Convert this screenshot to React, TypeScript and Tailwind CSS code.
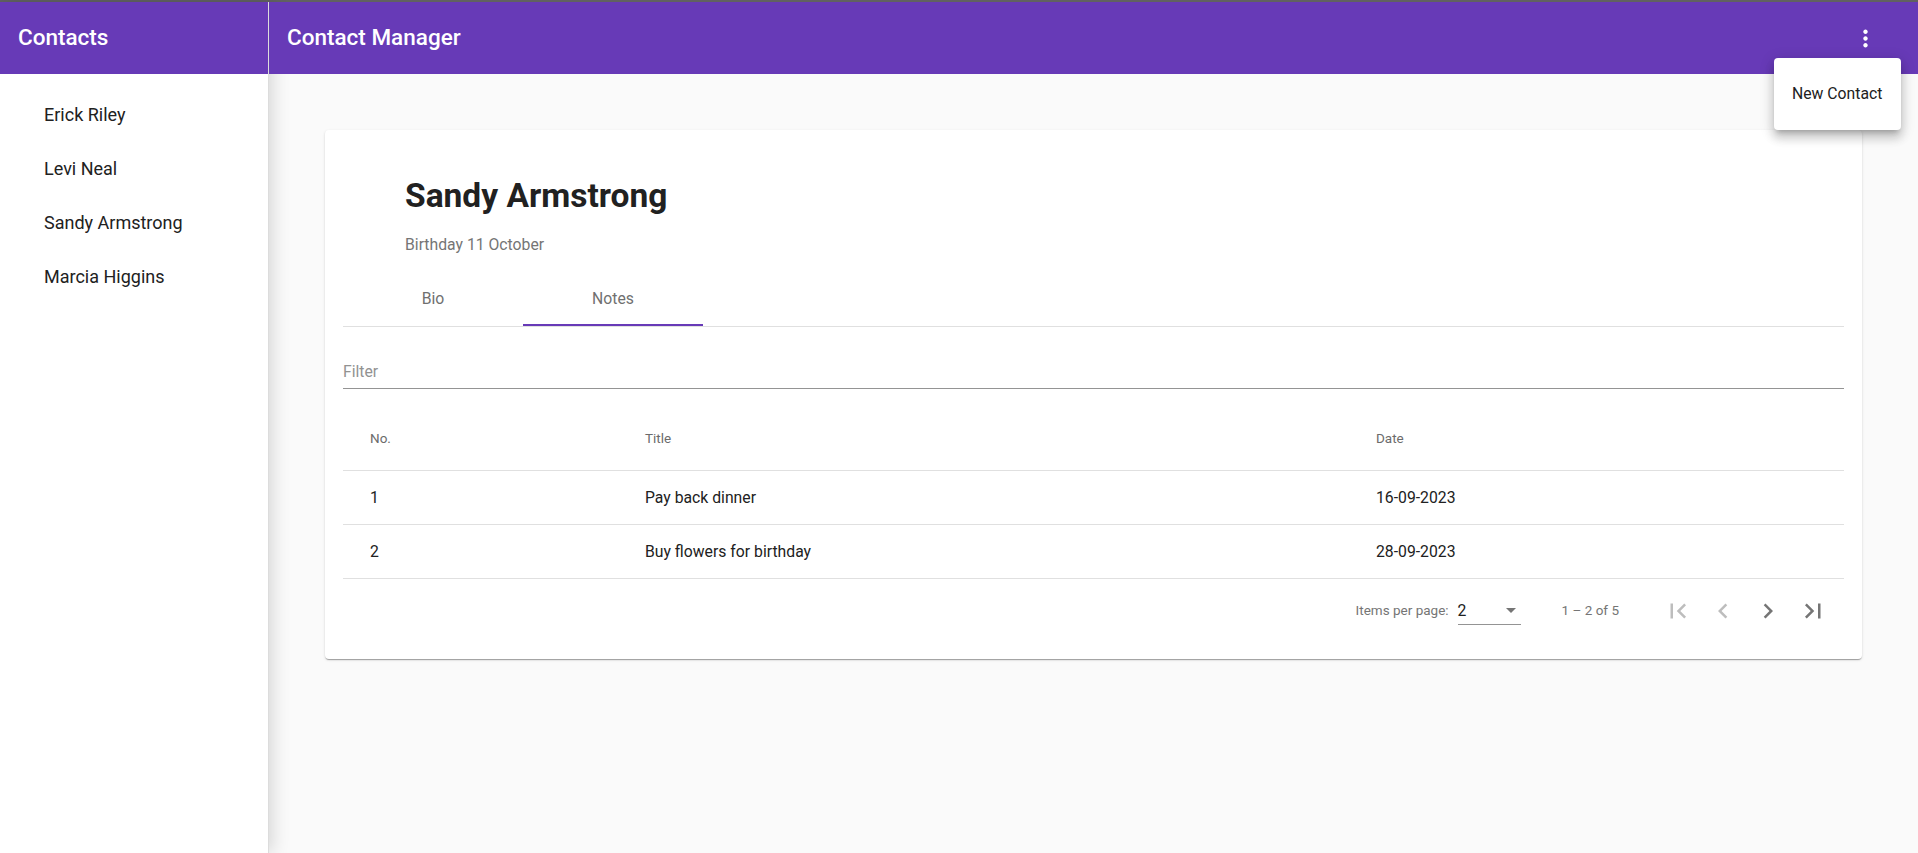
import React from 'react'

const contacts = ['Erick Riley', 'Levi Neal', 'Sandy Armstrong', 'Marcia Higgins']

const notes = [
    { no: 1, title: 'Pay back dinner', date: '16-09-2023' },
    { no: 2, title: 'Buy flowers for birthday', date: '28-09-2023' },
]

const icons = {
    more: 'M12 8c1.1 0 2-.9 2-2s-.9-2-2-2-2 .9-2 2 .9 2 2 2zm0 2c-1.1 0-2 .9-2 2s.9 2 2 2 2-.9 2-2-.9-2-2-2zm0 6c-1.1 0-2 .9-2 2s.9 2 2 2 2-.9 2-2-.9-2-2-2z',
    first: 'M18.41 16.59L13.82 12l4.59-4.59L17 6l-6 6 6 6zM6 6h2v12H6z',
    prev: 'M15.41 7.41L14 6l-6 6 6 6 1.41-1.41L10.83 12z',
    next: 'M10 6L8.59 7.41 13.17 12l-4.58 4.59L10 18l6-6z',
    last: 'M5.59 7.41L10.18 12l-4.59 4.59L7 18l6-6-6-6zM16 6h2v12h-2z',
}

const PagerButton = ({ d, className }: { d: string; className: string }) => (
    <button className={`flex h-[45px] w-[45px] items-center justify-center ${className}`}>
        <svg width="30" height="30" viewBox="0 0 24 24" fill="currentColor">
            <path d={d} />
        </svg>
    </button>
)

const App = () => {
    return (
        <div className="relative flex h-[853px] flex-col overflow-hidden bg-white font-['Roboto',sans-serif]">
            {/* window edge */}
            <div className="h-[2px] shrink-0 bg-[#616161]" />

            <div className="flex min-h-0 flex-1">
                {/* Sidebar */}
                <aside className="relative z-10 flex w-[269px] shrink-0 flex-col border-r border-[#dcdcdc] bg-white shadow-[4px_0_16px_rgba(0,0,0,0.14)]">
                    <div className="flex h-[72px] shrink-0 items-center bg-[#673ab7] px-[18px] text-[22.5px] font-medium text-white">
                        Contacts
                    </div>
                    <nav className="flex flex-col pt-[13px]">
                        {contacts.map((name) => (
                            <div key={name} className="flex h-[54px] items-center pl-[44px] text-[18px] text-[#212121]">
                                {name}
                            </div>
                        ))}
                    </nav>
                </aside>

                {/* Main */}
                <main className="flex min-w-0 flex-1 flex-col bg-[#fafafa]">
                    <header className="relative z-20 flex h-[72px] shrink-0 items-center justify-between bg-[#673ab7] pl-[18px] pr-[39px] text-white">
                        <h1 className="text-[22.5px] font-medium">Contact Manager</h1>
                        <svg width="27" height="27" viewBox="0 0 24 24" fill="currentColor">
                            <path d={icons.more} />
                        </svg>
                    </header>

                    <div className="p-[56px]">
                        <section className="rounded-[4px] bg-white px-[18px] pb-[17px] pt-[46px] shadow-[0_2px_1px_-1px_rgba(0,0,0,0.2),0_1px_1px_0_rgba(0,0,0,0.14),0_1px_3px_0_rgba(0,0,0,0.12)]">
                            {/* Contact header */}
                            <div className="pl-[62px]">
                                <h2 className="text-[33.5px] font-bold leading-[40px] text-[#212121]">Sandy Armstrong</h2>
                                <p className="mt-[18px] text-[15.75px] leading-[21px] text-[#757575]">Birthday 11 October</p>
                            </div>

                            {/* Tabs */}
                            <div className="mt-[17px] flex border-b border-[#e0e0e0]">
                                <div className="flex h-[54px] w-[180px] items-center justify-center text-[15.75px] text-[#707070]">
                                    Bio
                                </div>
                                <div className="relative flex h-[54px] w-[180px] items-center justify-center text-[15.75px] text-[#707070]">
                                    Notes
                                    <span className="absolute bottom-0 left-0 h-[2px] w-full bg-[#673ab7]" />
                                </div>
                            </div>

                            {/* Filter */}
                            <div className="border-b border-[#949494] pb-[6px] pt-[35px]">
                                <input
                                    placeholder="Filter"
                                    className="block h-[20px] w-full bg-transparent text-[15.75px] leading-[20px] text-[#212121] outline-none placeholder:text-[#929292]"
                                />
                            </div>

                            {/* Notes table */}
                            <div className="mt-[18px]">
                                <div className="grid h-[64px] grid-cols-[302px_731px_1fr] items-center border-b border-[#e0e0e0] text-[13.5px] text-[#6b6b6b]">
                                    <span className="pl-[27px]">No.</span>
                                    <span>Title</span>
                                    <span className="pr-[27px]">Date</span>
                                </div>
                                {notes.map((note) => (
                                    <div
                                        key={note.no}
                                        className="grid h-[54px] grid-cols-[302px_731px_1fr] items-center border-b border-[#e0e0e0] text-[15.75px] text-[#212121]"
                                    >
                                        <span className="pl-[27px]">{note.no}</span>
                                        <span>{note.title}</span>
                                        <span className="pr-[27px]">{note.date}</span>
                                    </div>
                                ))}
                            </div>

                            {/* Paginator */}
                            <div className="flex h-[63px] items-center justify-end pr-[9px] text-[13.5px] text-[#757575]">
                                <span>Items per page:</span>
                                <div className="ml-[9px] flex w-[63px] items-center justify-between border-b border-[#949494] pb-[3px] pt-[4px]">
                                    <span className="text-[15.75px] leading-[20px] text-[#212121]">2</span>
                                    <svg width="10" height="5" viewBox="0 0 10 5" className="mr-[5px]">
                                        <path d="M0 0h10L5 5z" fill="#757575" />
                                    </svg>
                                </div>
                                <span className="ml-[41px]">1 – 2 of 5</span>
                                <div className="ml-[36px] flex">
                                    <PagerButton d={icons.first} className="text-[#bdbdbd]" />
                                    <PagerButton d={icons.prev} className="text-[#bdbdbd]" />
                                    <PagerButton d={icons.next} className="text-[#757575]" />
                                    <PagerButton d={icons.last} className="text-[#757575]" />
                                </div>
                            </div>
                        </section>
                    </div>
                </main>
            </div>

            {/* Open overflow menu */}
            <div className="absolute right-[17px] top-[58px] z-30 w-[127px] rounded-[4px] bg-white py-[9px] shadow-[0_5px_5px_-3px_rgba(0,0,0,0.2),0_8px_10px_1px_rgba(0,0,0,0.14),0_3px_14px_2px_rgba(0,0,0,0.12)]">
                <div className="flex h-[54px] items-center px-[18px] text-[15.75px] text-[#212121]">New Contact</div>
            </div>
        </div>
    )
}

export default App
